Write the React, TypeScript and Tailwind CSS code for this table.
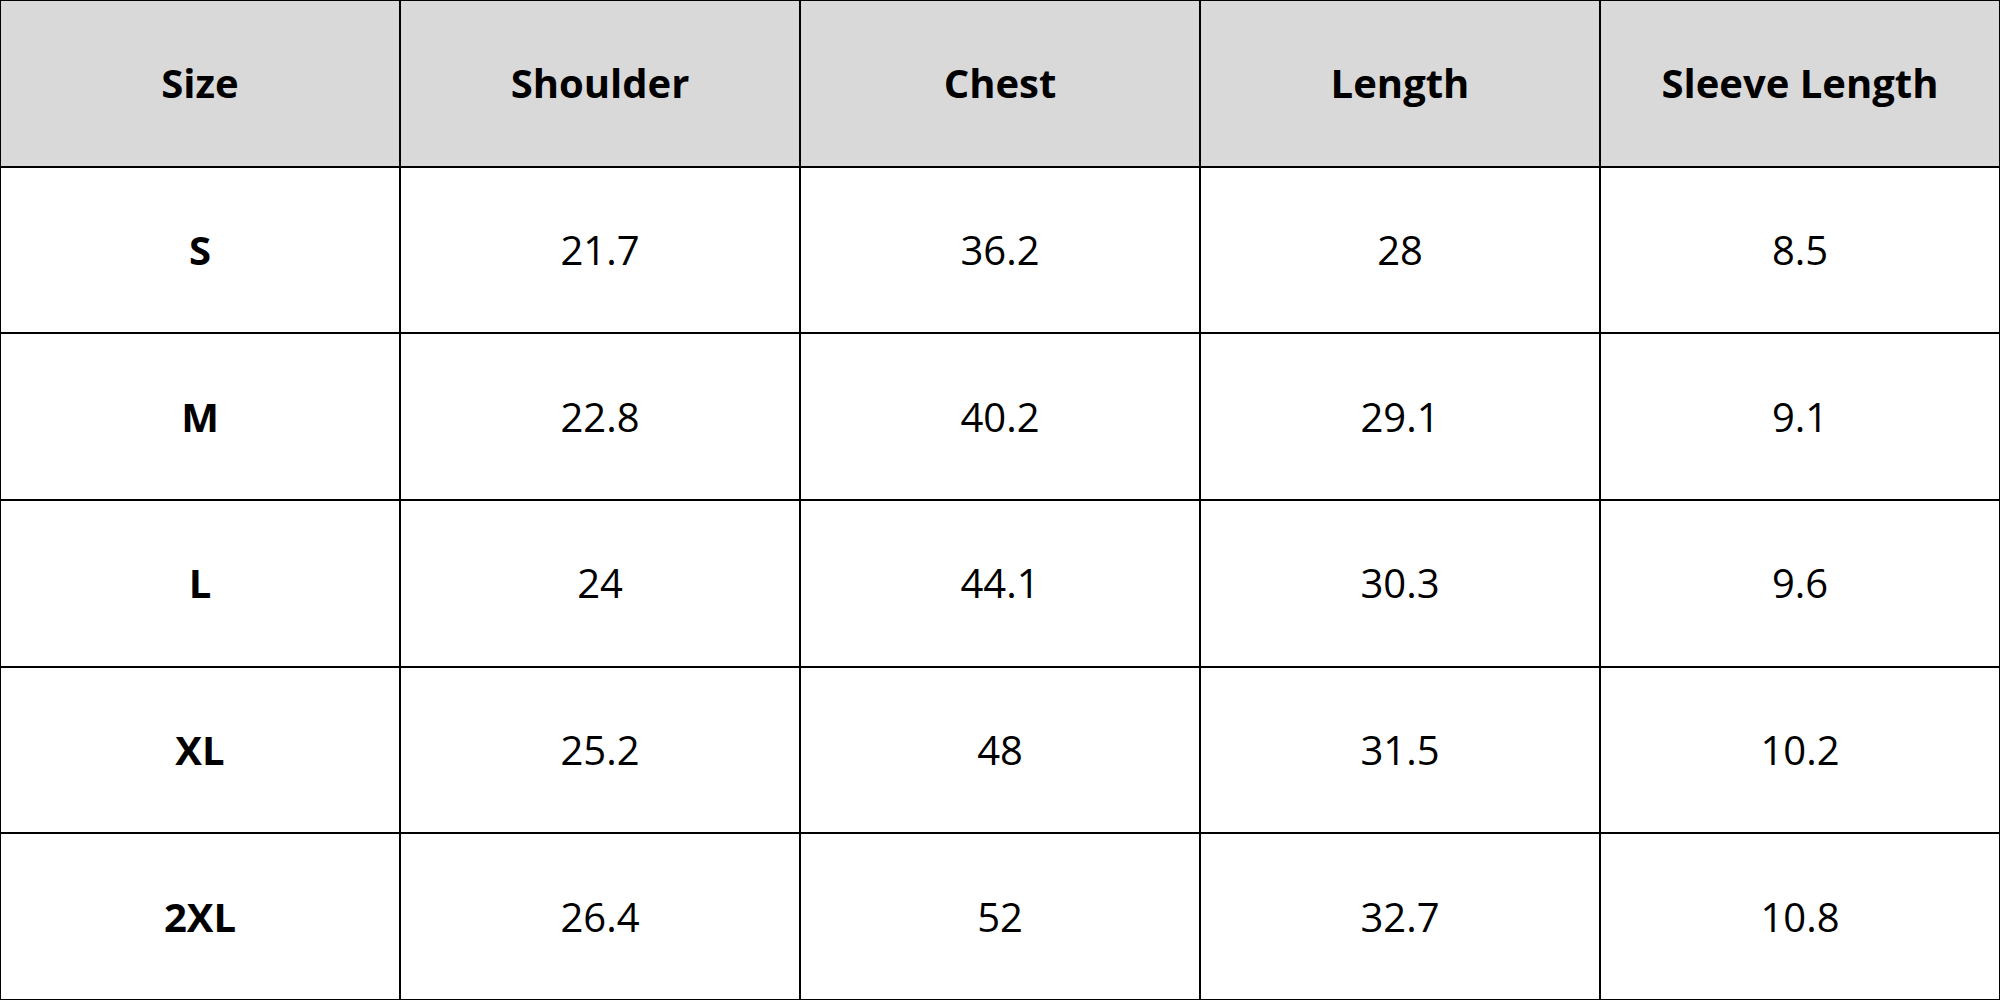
const headers = ["Size", "Shoulder", "Chest", "Length", "Sleeve Length"];

const rows = [
  ["S", "21.7", "36.2", "28", "8.5"],
  ["M", "22.8", "40.2", "29.1", "9.1"],
  ["L", "24", "44.1", "30.3", "9.6"],
  ["XL", "25.2", "48", "31.5", "10.2"],
  ["2XL", "26.4", "52", "32.7", "10.8"],
];

export default function App() {
  return (
    <div className="w-[2000px] h-[1000px] overflow-hidden bg-white font-['Open_Sans',sans-serif] text-black">
      <div className="grid grid-cols-5 grid-rows-6 gap-[2px] w-full h-full bg-black border border-black">
        {headers.map((h) => (
          <div key={h} className="bg-[#d9d9d9] flex items-center justify-center text-[40px] font-bold">
            {h}
          </div>
        ))}
        {rows.map((r) =>
          r.map((v, i) => (
            <div
              key={r[0] + i}
              className={`bg-white flex items-center justify-center text-[40px] ${i === 0 ? "font-bold" : "font-normal"}`}
            >
              {v}
            </div>
          ))
        )}
      </div>
    </div>
  );
}
